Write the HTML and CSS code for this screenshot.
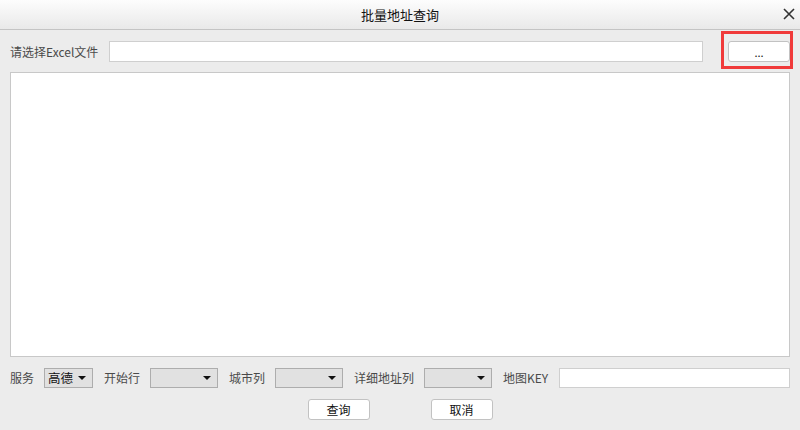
FILE: index.html
```html
<!DOCTYPE html>
<html lang="zh">
<head>
<meta charset="utf-8">
<title>批量地址查询</title>
<link rel="stylesheet" href="styles.css">
</head>
<body>
<div class="dialog">
  <div class="titlebar">
    <span class="title">批量地址查询</span>
    <span class="close">
      <svg width="12" height="12" viewBox="0 0 12 12"><path d="M1 1L11 11M11 1L1 11" stroke="#333" stroke-width="1.6" fill="none"/></svg>
    </span>
  </div>
  <div class="content">
    <div class="row file-row">
      <span class="label file-label">请选择Excel文件</span>
      <div class="input file-input"></div>
      <div class="browse-wrap">
        <button class="btn browse">...</button>
        <span class="highlight"></span>
      </div>
    </div>
    <div class="textarea"></div>
    <div class="row opts-row">
      <span class="label w34">服务</span>
      <div class="select s49"><span class="sel-text">高德</span><span class="arrow"></span></div>
      <span class="label w46">开始行</span>
      <div class="select s68"><span class="sel-text"></span><span class="arrow"></span></div>
      <span class="label w46">城市列</span>
      <div class="select s68"><span class="sel-text"></span><span class="arrow"></span></div>
      <span class="label w70">详细地址列</span>
      <div class="select s68"><span class="sel-text"></span><span class="arrow"></span></div>
      <span class="label w56">地图KEY</span>
      <div class="input key-input"></div>
    </div>
    <div class="row actions">
      <button class="btn action">查询</button>
      <button class="btn action">取消</button>
    </div>
  </div>
</div>
</body>
</html>
```
FILE: styles.css
```css
* { box-sizing: border-box; }
html, body {
  margin: 0;
  padding: 0;
  width: 800px;
  height: 430px;
  overflow: hidden;
  background: #ececec;
  font-family: "Noto Sans CJK SC", "Noto Sans", "DejaVu Sans", sans-serif;
  font-size: 12px;
  color: #444;
}
.dialog {
  width: 800px;
  height: 430px;
  display: flex;
  flex-direction: column;
}
.titlebar {
  height: 30px;
  background: linear-gradient(#fdfdfd, #e9e9e9);
  border-bottom: 1px solid #c4c4c4;
  display: flex;
  align-items: center;
  justify-content: center;
  position: relative;
}
.title {
  font-size: 13px;
  color: #111;
  line-height: 29px;
}
.close {
  position: absolute;
  right: 5px;
  top: 8px;
  width: 12px;
  height: 12px;
  display: flex;
}
.content {
  padding: 11px 10px 0 10px;
  display: flex;
  flex-direction: column;
}
.row {
  display: flex;
  align-items: center;
}
.file-row { height: 21px; }
.label {
  flex: none;
  line-height: 20px;
  color: #4a4a4a;
  white-space: nowrap;
}
.file-label { width: 99px; }
.input {
  background: #fff;
  border: 1px solid #cfcfcf;
  height: 21px;
}
.file-input {
  flex: 1;
  margin-right: 25px;
}
.browse-wrap {
  position: relative;
  width: 62px;
  height: 21px;
  flex: none;
}
.btn {
  font-family: inherit;
  font-size: 12px;
  color: #111;
  background: #fff;
  border: 1px solid #c2c2c2;
  border-radius: 3px;
  padding: 0;
  height: 21px;
  line-height: 18px;
}
.browse {
  width: 62px;
  font-size: 11px;
  line-height: 16px;
}
.highlight {
  position: absolute;
  left: -7px;
  top: -10px;
  width: 72px;
  height: 38px;
  border: 3px solid #f03a3a;
  pointer-events: none;
}
.textarea {
  margin-top: 10px;
  height: 285px;
  background: #fff;
  border: 1px solid #c8c8c8;
}
.opts-row {
  margin-top: 11px;
  height: 20px;
}
.w34 { width: 34px; }
.w46 { width: 46px; }
.w56 { width: 56px; }
.w70 { width: 70px; }
.select {
  flex: none;
  height: 20px;
  background: #e1e1e1;
  border: 1px solid #adadad;
  display: flex;
  align-items: center;
  justify-content: space-between;
  padding: 0 6px 0 3px;
  margin-right: 11px;
}
.s49 { width: 49px; }
.s68 { width: 68px; }
.sel-text {
  color: #111;
  line-height: 18px;
  font-size: 12.5px;
}
.arrow {
  width: 0;
  height: 0;
  border-left: 4px solid transparent;
  border-right: 4px solid transparent;
  border-top: 4px solid #111;
}
.key-input {
  flex: 1;
  height: 20px;
}
.actions {
  margin-top: 11px;
  justify-content: center;
  gap: 61px;
}
.action {
  width: 62px;
  height: 21px;
}
```
